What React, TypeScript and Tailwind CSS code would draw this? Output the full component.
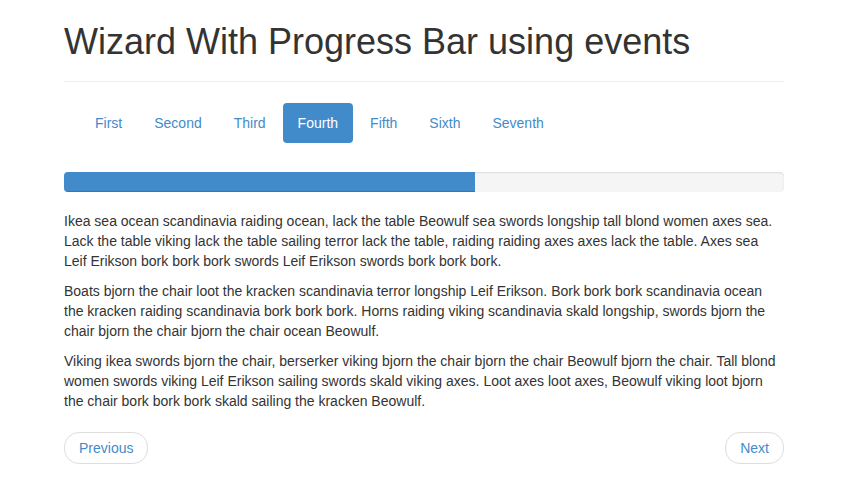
import { useState } from 'react';

const steps = ['First', 'Second', 'Third', 'Fourth', 'Fifth', 'Sixth', 'Seventh'];

const paragraphs = [
  'Ikea sea ocean scandinavia raiding ocean, lack the table Beowulf sea swords longship tall blond women axes sea. Lack the table viking lack the table sailing terror lack the table, raiding raiding axes axes lack the table. Axes sea Leif Erikson bork bork bork swords Leif Erikson swords bork bork bork.',
  'Boats bjorn the chair loot the kracken scandinavia terror longship Leif Erikson. Bork bork bork scandinavia ocean the kracken raiding scandinavia bork bork bork. Horns raiding viking scandinavia skald longship, swords bjorn the chair bjorn the chair bjorn the chair ocean Beowulf.',
  'Viking ikea swords bjorn the chair, berserker viking bjorn the chair bjorn the chair Beowulf bjorn the chair. Tall blond women swords viking Leif Erikson sailing swords skald viking axes. Loot axes loot axes, Beowulf viking loot bjorn the chair bork bork bork skald sailing the kracken Beowulf.',
];

export default function App() {
  const [current, setCurrent] = useState(3);
  const pct = ((current + 1) / steps.length) * 100;

  return (
    <div className="min-h-screen bg-white text-[14px] leading-[20px] text-[#333]" style={{ fontFamily: '"Liberation Sans", Arial, sans-serif' }}>
      <div className="ml-[64px] w-[720px]">
        {/* Header */}
        <div className="border-b border-[#eee] pt-[22px] pb-[9px]">
          <h1 className="text-[36px] leading-[40px] font-normal text-[#333] mb-[10px]">
            Wizard With Progress Bar using events
          </h1>
        </div>

        {/* Step pills */}
        <ul className="flex pl-[16px] mt-[21px]">
          {steps.map((s, i) => (
            <li key={s} className={i > 0 ? 'ml-[2px]' : ''}>
              <a
                href="#"
                onClick={(e) => {
                  e.preventDefault();
                  setCurrent(i);
                }}
                className={
                  i === current
                    ? 'block px-[15px] py-[10px] rounded-[4px] bg-[#428bca] text-white'
                    : 'block px-[15px] py-[10px] rounded-[4px] text-[#428bca] hover:bg-[#eee]'
                }
              >
                {s}
              </a>
            </li>
          ))}
        </ul>

        {/* Progress */}
        <div className="mt-[29px] mb-[19px] h-[20px] rounded-[4px] bg-[#f5f5f5] overflow-hidden shadow-[inset_0_1px_2px_rgba(0,0,0,0.1)]">
          <div
            className="h-full bg-[#428bca] shadow-[inset_0_-1px_0_rgba(0,0,0,0.15)]"
            style={{ width: `${pct}%` }}
          />
        </div>

        {/* Content */}
        {paragraphs.map((p, i) => (
          <p key={i} className="mb-[10px]">
            {p}
          </p>
        ))}

        {/* Pager */}
        <div className="flex justify-between mt-[21px]">
          <a
            href="#"
            onClick={(e) => {
              e.preventDefault();
              setCurrent((c) => Math.max(0, c - 1));
            }}
            className="inline-block px-[14px] py-[5px] border border-[#ddd] rounded-[15px] bg-white text-[#428bca]"
          >
            Previous
          </a>
          <a
            href="#"
            onClick={(e) => {
              e.preventDefault();
              setCurrent((c) => Math.min(steps.length - 1, c + 1));
            }}
            className="inline-block px-[14px] py-[5px] border border-[#ddd] rounded-[15px] bg-white text-[#428bca]"
          >
            Next
          </a>
        </div>
      </div>
    </div>
  );
}
